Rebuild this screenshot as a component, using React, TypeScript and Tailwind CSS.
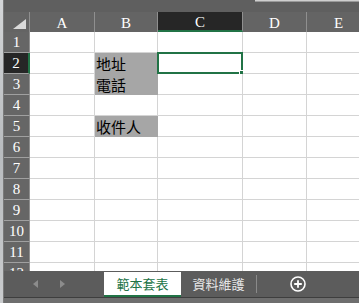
import React from 'react';

const serif = { fontFamily: '"Liberation Serif", "DejaVu Serif", serif' };
const cjk = { fontFamily: '"Noto Sans CJK TC", "Noto Sans", sans-serif' };

type Col = { key: string; w: string };

const cols: Col[] = [
  { key: 'A', w: 'w-[65px]' },
  { key: 'B', w: 'w-[63px]' },
  { key: 'C', w: 'w-[85px]' },
  { key: 'D', w: 'w-[64px]' },
  { key: 'E', w: 'w-[64px]' },
];

const cells: Record<string, string> = {
  B2: '地址',
  B3: '電話',
  B5: '收件人',
};

const filled = ['B2', 'B3', 'B5'];

const rows = [1, 2, 3, 4, 5, 6, 7, 8, 9, 10, 11, 12];

function ColHeader({ col }: { col: Col }) {
  const active = col.key === 'C';
  return (
    <div
      className={`${col.w} shrink-0 h-full flex items-center justify-center pt-[3px] text-[15px] text-white border-r border-[#8f8f8f] ${
        active ? 'bg-[#262626] border-b-2 border-b-[#217346]' : ''
      }`}
      style={serif}
    >
      {col.key}
    </div>
  );
}

function Cell({ col, row }: { col: Col; row: number }) {
  const id = col.key + row;
  const fill = filled.includes(id);
  const selected = id === 'C2';
  return (
    <div
      className={`${col.w} shrink-0 h-full relative flex items-end pl-[1px] pb-[1px] text-[15px] leading-[17px] text-black border-r border-b ${
        fill ? 'bg-[#a6a6a6] border-[#a6a6a6]' : 'bg-white border-[#d4d4d4]'
      }`}
      style={cjk}
    >
      {cells[id]}
      {selected && (
        <div className="absolute -left-[1px] -top-[1px] -right-[1px] -bottom-[1px] border-2 border-[#217346]">
          <div className="absolute -right-[4px] -bottom-[4px] w-[6px] h-[6px] bg-[#217346] border border-white" />
        </div>
      )}
    </div>
  );
}

export default function App() {
  return (
    <div className="w-[359px] h-[303px] flex overflow-hidden bg-[#5f5f5f]">
      <div className="w-[4px] shrink-0 h-full bg-gradient-to-b from-[#d4d6d8] via-[#b9bcbf] to-[#c9cbcd] border-r border-[#7a7a7a]" />

      <div className="flex-1 flex flex-col min-w-0">
        <div className="h-[12px] shrink-0 flex justify-end">
          <div className="w-[104px] h-[2px] bg-[#cfcfcf] border-b border-[#9a9a9a]" />
        </div>

        <div className="h-[20px] shrink-0 flex bg-[#646464]">
          <div className="w-[26px] shrink-0 h-full relative border-r border-[#8f8f8f]">
            <div
              className="absolute right-[3px] bottom-[3px] w-[13px] h-[10px] bg-[#d9d9d9]"
              style={{ clipPath: 'polygon(100% 0, 100% 100%, 0 100%)' }}
            />
          </div>
          {cols.map((c) => (
            <ColHeader key={c.key} col={c} />
          ))}
        </div>

        <div className="flex-1 min-h-0 overflow-hidden">
          {rows.map((r) => (
            <div key={r} className="h-[21px] flex">
              <div
                className={`w-[26px] shrink-0 h-full flex items-end justify-center pb-[1px] text-[15px] leading-[17px] text-white border-b border-[#a0a0a0] ${
                  r === 2 ? 'bg-[#262626] border-r-2 border-r-[#217346]' : 'bg-[#666666] border-r border-r-[#8f8f8f]'
                }`}
                style={serif}
              >
                {r}
              </div>
              {cols.map((c) => (
                <Cell key={c.key} col={c} row={r} />
              ))}
            </div>
          ))}
        </div>

        <div className="h-[26px] shrink-0 flex items-stretch bg-[#5c5c5c]">
          <div className="w-[100px] shrink-0 flex items-center pl-[29px] gap-[22px]">
            <svg width="5" height="8" viewBox="0 0 5 8">
              <path d="M5 0 L0 4 L5 8 Z" fill="#8c8c8c" />
            </svg>
            <svg width="5" height="8" viewBox="0 0 5 8">
              <path d="M0 0 L5 4 L0 8 Z" fill="#8c8c8c" />
            </svg>
          </div>
          <div
            className="w-[77px] shrink-0 mt-[1px] bg-white flex items-center justify-center text-[13px] text-[#217346] border-b-2 border-[#217346]"
            style={cjk}
          >
            範本套表
          </div>
          <div
            className="w-[75px] shrink-0 flex items-center justify-center text-[13px] text-[#e6e6e6]"
            style={cjk}
          >
            資料維護
          </div>
          <div className="w-px my-[4px] bg-[#8a8a8a]" />
          <div className="w-[82px] shrink-0 flex items-center justify-center">
            <svg width="16" height="16" viewBox="0 0 16 16">
              <circle cx="8" cy="8" r="7" fill="none" stroke="#ffffff" strokeWidth="1.6" />
              <path d="M8 4.2 V11.8 M4.2 8 H11.8" stroke="#ffffff" strokeWidth="1.8" />
            </svg>
          </div>
        </div>

        <div className="h-[6px] shrink-0 bg-[#6e6e6e] border-t border-[#3e3e3e]" />
      </div>
    </div>
  );
}
